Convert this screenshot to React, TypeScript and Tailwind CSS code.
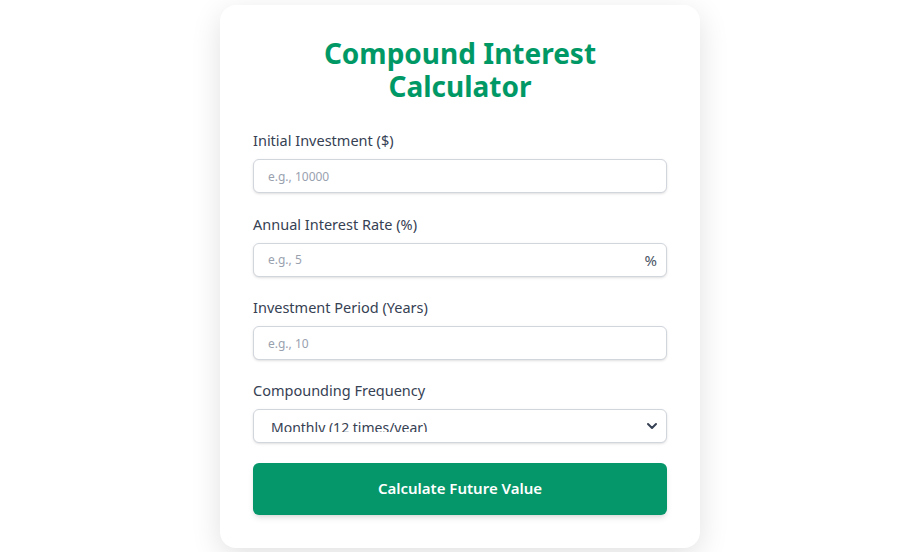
import { ChevronDown } from 'lucide-react';

const font = { fontFamily: '"Noto Sans", "Open Sans", sans-serif' };

function Field({ label, placeholder, suffix }: { label: string; placeholder: string; suffix?: string }) {
  return (
    <div className="mb-[19.5px]">
      <label className="block mb-2 text-[14.5px] leading-[22px] text-gray-700">{label}</label>
      <div className="relative">
        <input
          type="text"
          placeholder={placeholder}
          className="w-full h-[34px] px-[14px] rounded-md border border-gray-300 bg-white text-[12px] text-gray-800 placeholder:text-gray-400 outline-none shadow-sm"
        />
        {suffix && (
          <span className="absolute right-[10px] top-1/2 -translate-y-1/2 text-[15px] text-gray-600">{suffix}</span>
        )}
      </div>
    </div>
  );
}

export default function App() {
  return (
    <div className="min-h-[552px] bg-white flex justify-center pl-[23px] pt-[5px]" style={font}>
      <div className="w-[480px] h-[543px] bg-white rounded-2xl shadow-[0_8px_30px_rgba(0,0,0,0.12)] px-[33px] pt-[32px] pb-[33px]">
        <h1 className="text-center text-[28px] leading-[33px] font-bold text-emerald-600 mb-[26px]">
          Compound Interest
          <br />
          Calculator
        </h1>

        <Field label="Initial Investment ($)" placeholder="e.g., 10000" />
        <Field label="Annual Interest Rate (%)" placeholder="e.g., 5" suffix="%" />
        <Field label="Investment Period (Years)" placeholder="e.g., 10" />

        <div className="-mt-px mb-5">
          <label className="block mb-2 text-[14.5px] leading-[22px] text-gray-700">Compounding Frequency</label>
          <div className="relative h-[34px] rounded-md border border-gray-300 bg-white shadow-sm">
            <div className="h-[22px] overflow-hidden">
              <div className="pl-[17px] pt-[7px] text-[14px] leading-[22px] text-gray-700 whitespace-nowrap">
                Monthly (12 times/year)
              </div>
            </div>
            <ChevronDown className="absolute right-[6px] top-1/2 -translate-y-1/2 w-4 h-4 text-gray-700" strokeWidth={3} />
          </div>
        </div>

        <button className="w-full h-[52px] rounded-md bg-[#059669] text-white text-[15px] font-semibold shadow-md">
          Calculate Future Value
        </button>
      </div>
    </div>
  );
}
